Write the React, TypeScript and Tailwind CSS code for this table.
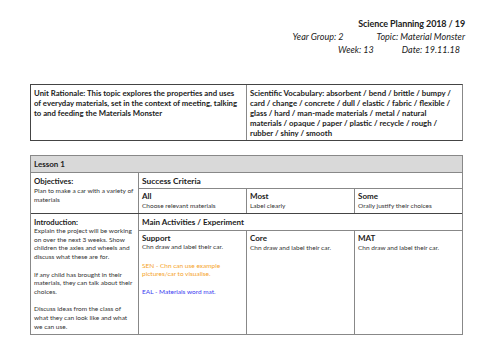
const txt = "text-[#222]";

const Cell = ({ title, body, last }: { title: string; body: string; last?: boolean }) => (
  <div className={`flex-1 px-[3px] pt-[2px] ${last ? "" : "border-r border-[#888]"}`}>
    <div className="text-[8px] font-bold leading-[10px]">{title}</div>
    <div className="text-[6.5px] leading-[9px] text-[#333]">{body}</div>
  </div>
);

export default function App() {
  return (
    <div className={`w-[500px] h-[353px] bg-white font-['Lato',sans-serif] ${txt} overflow-hidden`}>
      <div className="pt-[17px] pr-[35px] flex flex-col items-end">
        <div className="text-[9px] font-bold leading-[13px] tracking-[-0.1px]">Science Planning 2018 / 19</div>
        <div className="flex gap-[33px] italic text-[9px] leading-[13px]">
          <span>Year Group: 2</span>
          <span>Topic: Material Monster</span>
        </div>
        <div className="flex gap-[28px] italic text-[9px] leading-[14px] pr-[5px]">
          <span>Week: 13</span>
          <span>Date: 19.11.18</span>
        </div>
      </div>

      <div className="mt-[27px] ml-[30px] w-[433px] h-[57px] flex border border-[#444] border-r-[#888]">
        <div className="w-[216px] border-r border-[#888] px-[3px] pt-[3px] text-[7.75px] font-bold leading-[10px]">
          Unit Rationale: This topic explores the properties and uses of everyday materials, set in the context of meeting, talking to and feeding the Materials Monster
        </div>
        <div className="flex-1 px-[3px] pt-[3px] text-[7.8px] font-bold leading-[10px]">
          Scientific Vocabulary: absorbent / bend / brittle / bumpy / card / change / concrete / dull / elastic / fabric / flexible / glass / hard / man-made materials / metal / natural materials / opaque / paper / plastic / recycle / rough / rubber / shiny / smooth
        </div>
      </div>

      <div className="mt-[14px] ml-[30px] w-[433px] border border-[#888]">
        <div className="h-[17px] bg-[#d9d9d9] border-b border-[#888] px-[3px] text-[8px] font-bold leading-[16px]">Lesson 1</div>

        <div className="flex h-[41px] border-b border-[#444]">
          <div className="w-[108px] border-r border-[#888] px-[3px] pt-[3px]">
            <div className="text-[7.8px] font-bold leading-[10px]">Objectives:</div>
            <div className="text-[6.5px] leading-[9px] text-[#333]">Plan to make a car with a variety of materials</div>
          </div>
          <div className="flex-1 flex flex-col">
            <div className="h-[16px] border-b border-[#888] px-[3px] text-[8.4px] font-bold leading-[16px]">Success Criteria</div>
            <div className="flex flex-1">
              <Cell title="All" body="Choose relevant materials" />
              <Cell title="Most" body="Label clearly" />
              <Cell title="Some" body="Orally justify their choices" last />
            </div>
          </div>
        </div>

        <div className="flex h-[120px]">
          <div className="w-[108px] border-r border-[#888] px-[3px] pt-[3px]">
            <div className="text-[7.6px] font-bold leading-[10px]">Introduction:</div>
            <div className="text-[6.5px] leading-[8.7px] text-[#333]">
              <p>Explain the project will be working on over the next 3 weeks. Show children the axles and wheels and discuss what these are for.</p>
              <p className="mt-[8.7px]">If any child has brought in their materials, they can talk about their choices.</p>
              <p className="mt-[8.7px]">Discuss ideas from the class of what they can look like and what we can use.</p>
            </div>
          </div>
          <div className="flex-1 flex flex-col">
            <div className="h-[17px] border-b border-[#888] px-[3px] text-[8px] font-bold leading-[17px]">Main Activities / Experiment</div>
            <div className="flex flex-1">
              <div className="flex-1 px-[3px] pt-[2px] border-r border-[#888]">
                <div className="text-[8px] font-bold leading-[10px]">Support</div>
                <div className="text-[6.5px] leading-[8.7px] text-[#333]">Chn draw and label their car.</div>
                <div className="mt-[10px] text-[6.5px] leading-[8.7px] text-[#f5a32a]">SEN - Chn can use example pictures/car to visualise.</div>
                <div className="mt-[9px] text-[6.5px] leading-[8.7px] text-[#3b3bf0]">EAL - Materials word mat.</div>
              </div>
              <Cell title="Core" body="Chn draw and label their car." />
              <Cell title="MAT" body="Chn draw and label their car." last />
            </div>
          </div>
        </div>
      </div>
    </div>
  );
}
